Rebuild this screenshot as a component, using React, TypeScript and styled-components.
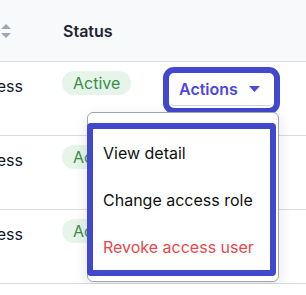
import styled, {createGlobalStyle} from 'styled-components';

const GlobalStyle = createGlobalStyle`
  * {
    box-sizing: border-box;
  }
  body {
    margin: 0;
    background: #ffffff;
    font-family: Inter, "Liberation Sans", sans-serif;
    overflow: hidden;
  }
`;

const Table = styled.div`
  width: 306px;
`;

const Row = styled.div<{$head?: boolean}>`
  display: grid;
  grid-template-columns: 47px 124px 1fr;
  height: ${(p) => (p.$head ? 62 : 74)}px;
  background: ${(p) => (p.$head ? '#f8f9fb' : '#ffffff')};
  border-bottom: 1px solid #d8dce3;
`;

const ClipCell = styled.div<{$head?: boolean}>`
  display: flex;
  justify-content: flex-end;
  align-items: ${(p) => (p.$head ? 'center' : 'flex-start')};
  gap: 8px;
  overflow: hidden;
  white-space: nowrap;
  padding: ${(p) => (p.$head ? '0 36px 0 0' : '12px 24px 0 0')};
  font-size: 16px;
  line-height: 24px;
  color: ${(p) => (p.$head ? '#1e2433' : '#111827')};
  font-weight: ${(p) => (p.$head ? 600 : 400)};

  & > * {
    flex-shrink: 0;
  }
`;

const HeadCell = styled.div`
  display: flex;
  align-items: center;
  padding-left: 16px;
  font-size: 16px;
  font-weight: 600;
  color: #1e2433;
`;

const StatusCell = styled.div`
  padding: 9px 0 0 15px;
`;

const Badge = styled.span`
  display: inline-flex;
  align-items: center;
  height: 24px;
  padding: 0 11px;
  border-radius: 12px;
  background: #e6f4e9;
  color: #3b8d4c;
  font-size: 16px;
`;

const ActionsCell = styled.div`
  padding-top: 13px;
`;

const Dropdown = styled.div`
  position: relative;
  width: 101px;
`;

const ActionButton = styled.button<{$focused?: boolean}>`
  display: flex;
  align-items: center;
  gap: 11px;
  width: 101px;
  height: 31px;
  padding: 0 0 3px 8px;
  border: none;
  border-bottom: 1px solid #cfd3da;
  border-radius: 3px;
  background: #ffffff;
  color: #5046e4;
  font-family: Inter, "Liberation Sans", sans-serif;
  font-size: 16px;
  font-weight: 600;
  outline: ${(p) => (p.$focused ? '6px solid #4248cb' : 'none')};
  outline-offset: 2px;
`;

const Menu = styled.div`
  position: absolute;
  top: calc(100% + 6px);
  right: -7px;
  width: 192px;
  padding: 10px 2px 5px 0;
  background: #ffffff;
  border: 1px solid #9ea5b3;
  border-radius: 6px;
  box-shadow: 0 4px 14px rgba(20, 28, 45, 0.12);
  z-index: 2;
`;

const MenuList = styled.div`
  margin-left: -1px;
  border: 6px solid #4248cb;
  border-radius: 4px;
`;

const MenuItem = styled.div<{$danger?: boolean}>`
  display: flex;
  align-items: center;
  height: 47px;
  padding-left: 10px;
  font-size: 16px;
  color: ${(p) => (p.$danger ? '#e5484d' : '#111111')};
`;

const SortIcon = () => (
  <svg width="10" height="14" viewBox="0 0 10 14">
    <path d="M5 0 L10 5 L0 5 Z" fill="#a0a6b4" />
    <path d="M0 9 L10 9 L5 14 Z" fill="#a0a6b4" />
  </svg>
);

const Caret = () => (
  <svg width="11" height="6" viewBox="0 0 11 6">
    <path d="M0 0 L11 0 L5.5 6 Z" fill="#5046e4" />
  </svg>
);

const rows = [1, 2, 3];

export default function App() {
  return (
    <>
      <GlobalStyle />
      <Table>
        <Row $head>
          <ClipCell $head>
            <span>Access</span>
            <SortIcon />
          </ClipCell>
          <HeadCell>Status</HeadCell>
          <div />
        </Row>
        {rows.map((r) => (
          <Row key={r}>
            <ClipCell>Full access</ClipCell>
            <StatusCell>
              <Badge>Active</Badge>
            </StatusCell>
            <ActionsCell>
              <Dropdown>
                <ActionButton $focused={r === 1}>
                  Actions
                  <Caret />
                </ActionButton>
                {r === 1 && (
                  <Menu>
                    <MenuList>
                      <MenuItem>View detail</MenuItem>
                      <MenuItem>Change access role</MenuItem>
                      <MenuItem $danger>Revoke access user</MenuItem>
                    </MenuList>
                  </Menu>
                )}
              </Dropdown>
            </ActionsCell>
          </Row>
        ))}
      </Table>
    </>
  );
}
